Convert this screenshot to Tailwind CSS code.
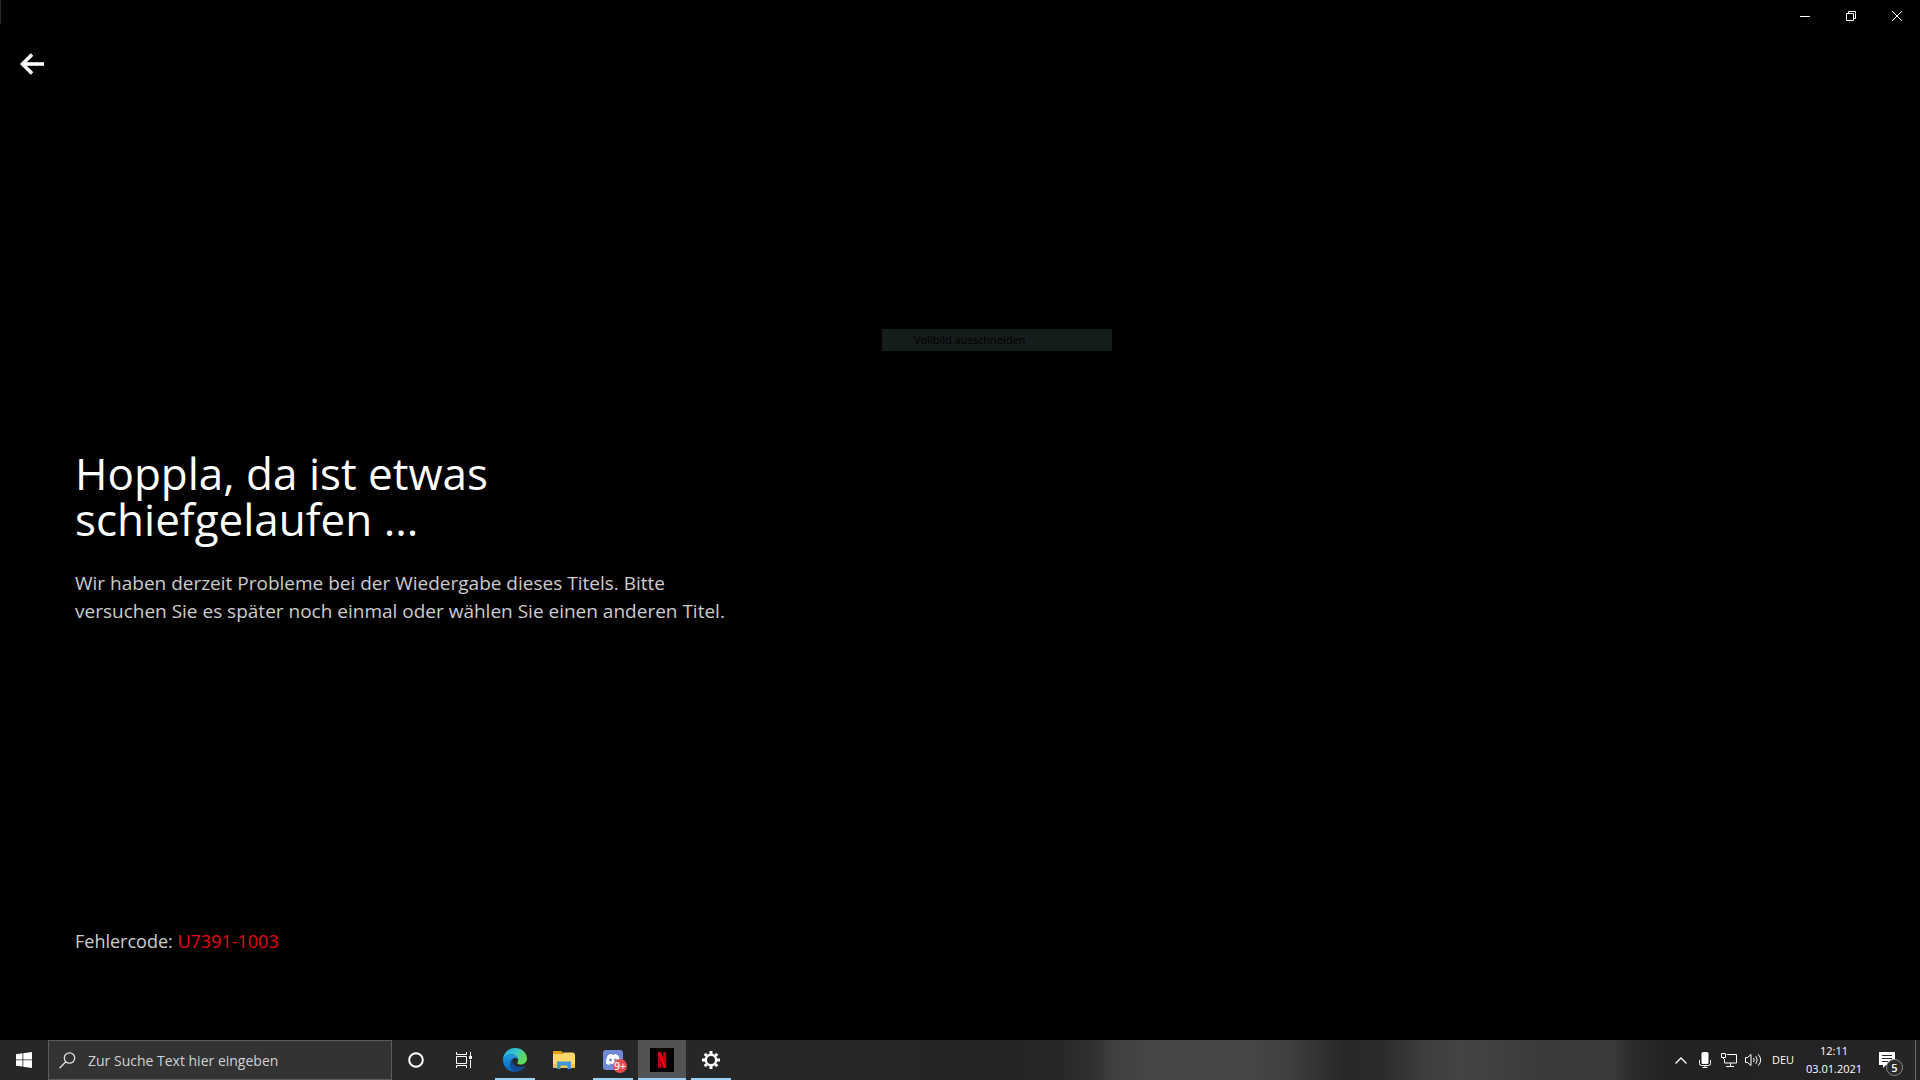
<!DOCTYPE html>
<html lang="de">
<head>
<meta charset="utf-8">
<meta name="viewport" content="width=device-width, initial-scale=1">
<title>Netflix</title>
<script src="https://cdn.jsdelivr.net/npm/@tailwindcss/browser@4"></script>
</head>
<body class="relative flex h-screen flex-col overflow-hidden bg-black font-['Open_Sans',sans-serif] text-white">

<!-- Window caption -->
<header class="flex h-8 shrink-0 items-start justify-between">
  <span class="h-6 w-px bg-[#2b2b2b]"></span>
  <div class="flex">
    <button type="button" aria-label="Minimieren" class="flex h-8 w-[46px] items-center justify-center">
      <svg class="size-[10px]" viewBox="0 0 10 10" stroke="#fff" fill="none"><path d="M0 5.500h10"/></svg>
    </button>
    <button type="button" aria-label="Verkleinern" class="flex h-8 w-[46px] items-center justify-center">
      <svg class="size-[10px]" viewBox="0 0 10 10" stroke="#fff" fill="none"><path d="M.5 2.500h7v7h-7zM2.500 2.500V.5h7v7h-2"/></svg>
    </button>
    <button type="button" aria-label="Schließen" class="flex h-8 w-[46px] items-center justify-center">
      <svg class="size-[10px]" viewBox="0 0 10 10" stroke="#fff" fill="none"><path d="M0 0l10 10M10 0L0 10"/></svg>
    </button>
  </div>
</header>

<!-- Error page -->
<main class="flex grow flex-col">
  <button type="button" aria-label="Zurück" class="flex size-16 items-center justify-center">
    <svg class="h-6 w-6" viewBox="0 0 24 24" fill="none" stroke="#fff" stroke-width="3.600"><path d="M24.500 12H3"/><path d="M12 2.500L2.500 12l9.500 9.500"/></svg>
  </button>
  <section class="mt-[354px] grow px-[75px]">
    <h1 class="text-[44px] leading-[46px]">Hoppla, da ist etwas<br>schiefgelaufen ...</h1>
    <p class="mt-[27px] text-[19px] leading-7 text-[#cccccc]">Wir haben derzeit Probleme bei der Wiedergabe dieses Titels. Bitte<br>versuchen Sie es später noch einmal oder wählen Sie einen anderen Titel.</p>
  </section>
  <p class="mb-[85px] px-[75px] text-[18px] leading-7 text-[#cccccc]">Fehlercode: <span class="text-[#e50914]">U7391-1003</span></p>
</main>

<!-- Taskbar -->
<footer class="flex h-10 shrink-0 items-stretch bg-[linear-gradient(90deg,#272727_0%,#272727_46%,#232323_50%,#272626_55%,#303030_57%,#404040_58%,#464646_60%,#464646_65%,#404040_67%,#303030_69%,#292828_70%,#2c2b2b_72%,#3c3c3c_74%,#444444_76%,#3b3b3b_80%,#3a3a3a_84%,#2c2c2c_85%,#232222_87%,#262525_100%)]">
  <button type="button" aria-label="Start" class="flex w-12 items-center justify-center">
    <svg class="size-4" viewBox="0 0 16 16" fill="#fff"><path d="M0 2.200L6.500 1.300V7.500H0zM7.300 1.200L16 0v7.500H7.300zM0 8.300h6.500v6.300L0 13.700zM7.300 8.300H16V16l-8.700-1.300z"/></svg>
  </button>
  <label class="flex w-[344px] items-center gap-3 border border-[#5c5c5c] bg-[#333333] px-[10px]">
    <svg class="h-[17px] w-[17px] shrink-0" viewBox="0 0 17 17" fill="none" stroke="#e0e0e0" stroke-width="1.300"><circle cx="10.500" cy="6" r="5.200"/><path d="M6.800 9.700L.5 16.300"/></svg>
    <input type="text" aria-label="Suche" placeholder="Zur Suche Text hier eingeben" class="w-full bg-transparent text-[14px] outline-none placeholder:text-[#d2d2d2]">
  </label>
  <button type="button" aria-label="Cortana" class="flex w-12 items-center justify-center">
    <svg class="size-4" viewBox="0 0 16 16" fill="none" stroke="#fff" stroke-width="2"><circle cx="8" cy="8" r="6.800"/></svg>
  </button>
  <button type="button" aria-label="Taskansicht" class="flex w-12 items-center justify-center">
    <svg class="size-4" viewBox="0 0 16 16" fill="none" stroke="#fff"><path d="M.5 0v2.500h10V0M.5 16v-2.500h10V16M.5 4.500h10v7H.5zM14.500 0v4M14.500 8v8"/><path fill="#fff" stroke="none" d="M13 4h3v3h-3z"/></svg>
  </button>
  <nav aria-label="Apps" class="ml-[3px] flex gap-px">
    <button type="button" aria-label="Edge" class="flex w-12 flex-col items-center">
      <span class="flex grow items-center pt-[2px]">
        <svg class="size-6" viewBox="0 0 24 24">
          <defs>
            <linearGradient id="edgeTop" x1="0" y1="0" x2="1" y2="0.400"><stop offset="0" stop-color="#2aa8e0"/><stop offset=".5" stop-color="#32c3d4"/><stop offset="1" stop-color="#62dc55"/></linearGradient>
            <linearGradient id="edgeLeft" x1="0" y1="0" x2="0" y2="1"><stop offset="0" stop-color="#1f9be4"/><stop offset="1" stop-color="#0a63b8"/></linearGradient>
          </defs>
          <path fill="url(#edgeTop)" d="M0 11.500C.4 5 5.500 0 12 0c7 0 12 5 12 10.500 0 3.500-2.700 6-6 6-2.300 0-3.800-.8-3.800-1.600 0-.5 1-1.200 1-2.900 0-3-2.900-5.500-7-5.500C4.500 6.500 1.500 8.500 0 11.500z"/>
          <path fill="url(#edgeLeft)" d="M0 12C.5 8.500 4 6.500 8 6.500c4.200 0 7.200 2.500 7.200 5.500-.5-1.500-2-2.300-3.300-2.300-2.300.3-4.400 3.300-4.400 6.300 0 4.200 3 7.200 6.500 7.800-.7.100-1.300.2-2 .2C5 24 0 18.600 0 12z"/>
          <path fill="#124a96" d="M11.300 9.900C8.600 10.700 7 13.300 7.200 16.500c.3 4 3.500 7 7 7.200 3.200-.5 6-2.300 7.800-5 .3-.5-.1-.8-.6-.6-1.300.6-2.700.9-4.200.9-4.400 0-7.700-2.700-7.700-5.700 0-1.400.7-2.600 1.800-3.400z"/>
        </svg>
      </span>
      <span class="h-[2px] w-10 bg-[#9bd0fa]"></span>
    </button>
    <button type="button" aria-label="Explorer" class="flex w-12 items-center justify-center">
      <svg class="h-[18px] w-[22px]" viewBox="0 0 22 18">
        <path fill="#e8a010" d="M0 0h8.500l1.500 2h-1v3H0z"/><path fill="#ffd869" d="M0 3h9l1.500-1.500H20L22 3v14H0z"/><path fill="#f5c64e" d="M0 13h22v4H0z"/>
        <path fill="#3d97dc" d="M4 18V10.500h14V18h-3.500v-3.500h-7V18z"/>
      </svg>
    </button>
    <button type="button" aria-label="Discord" class="flex w-12 flex-col items-center">
      <span class="relative flex grow items-center pt-[2px]">
        <svg class="size-6" viewBox="0 0 24 24">
          <rect x="2" y="2" width="20" height="20" rx="3" fill="#7289da"/>
          <path fill="#fff" d="M7 7.300c1.200-.9 2.500-1.300 3.600-1.300l.4.800c.7-.1 1.300-.1 2 0l.5-.8c1.100 0 2.400.4 3.500 1.300 1.500 2.500 2.300 5 2 8-1.200 1-2.400 1.500-3.600 1.500l-.8-1.200c-1.700.4-3.600.4-5.200 0l-.8 1.200c-1.200 0-2.500-.5-3.600-1.500-.3-3 .4-5.500 2-8z"/>
          <circle cx="9.500" cy="12" r="1.400" fill="#7289da"/><circle cx="14.500" cy="12" r="1.400" fill="#7289da"/>
        </svg>
        <span class="absolute -right-[2px] bottom-[5px] flex size-[14px] items-center justify-center rounded-full bg-[#ec4b4f] text-[10px] leading-none font-semibold">9+</span>
      </span>
      <span class="h-[2px] w-10 bg-[#9bd0fa]"></span>
    </button>
    <button type="button" aria-label="Netflix" class="flex w-12 flex-col items-center bg-[#535353]">
      <span class="flex grow items-center pt-[2px]">
        <svg class="size-6" viewBox="0 0 24 24">
          <rect width="24" height="24" fill="#000"/>
          <path fill="#b1060f" d="M8 4h3v15.700L8 20zM13.200 4h3v16l-3-.3z"/>
          <path fill="#e50914" d="M8 4h3l5.200 16-3-.3z"/>
        </svg>
      </span>
      <span class="h-[2px] w-12 bg-[#9bd0fa]"></span>
    </button>
    <button type="button" aria-label="Einstellungen" class="flex w-12 flex-col items-center">
      <span class="flex grow items-center pt-[2px]">
        <svg class="h-[18px] w-[18px]" viewBox="-9 -9 18 18" fill="none" stroke="#fff">
          <circle r="5.200" stroke-width="2.400"/>
          <path stroke-width="3" d="M0-6v-3M0 6v3M-6 0h-3M6 0h3M-4.300-4.300l-2-2M4.300-4.300l2-2M-4.300 4.300l-2 2M4.300 4.300l2 2"/>
        </svg>
      </span>
      <span class="h-[2px] w-10 bg-[#9bd0fa]"></span>
    </button>
  </nav>

  <div class="ml-auto flex items-center">
    <button type="button" aria-label="Ausgeblendete Symbole" class="flex w-6 justify-center">
      <svg class="h-[7px] w-3" viewBox="0 0 12 7" fill="none" stroke="#fff" stroke-width="1.300"><path d="M.5 6.500L6 1l5.500 5.500"/></svg>
    </button>
    <button type="button" aria-label="Mikrofon" class="flex w-6 justify-center">
      <svg class="h-4 w-3" viewBox="0 0 12 16" fill="none" stroke="#fff"><rect x="2.500" y="0" width="7" height="12" rx="1.500" fill="#fff" stroke="none"/><path d="M.5 8v3.500q0 2 2 2h7q2 0 2-2V8M6 13.500V16M3.500 15.500h5"/></svg>
    </button>
    <button type="button" aria-label="Netzwerk" class="flex w-6 justify-center">
      <svg class="h-[14px] w-4" viewBox="0 0 16 14" fill="none" stroke="#fff"><path d="M6 1.500h9.500v8.500h-12V6M9.500 10v3.500M5 13.500h8M.5 .5h4v4h-4zM2.500 4.500V6"/></svg>
    </button>
    <button type="button" aria-label="Lautstärke" class="flex w-6 justify-center">
      <svg class="h-[14px] w-[17px]" viewBox="0 0 17 14" fill="none" stroke="#fff"><path d="M.5 4.500h2L6 1.500v11L2.500 9.500h-2zM8.500 5q1.500 2 0 4M10.800 3.200q3 3.800 0 7.600M13.200 1.300q5 5.700 0 11.400"/></svg>
    </button>
    <button type="button" class="w-9 text-center text-[11px]">DEU</button>
    <button type="button" class="w-[66px] text-center text-[11px] leading-[18px]">12:11<br>03.01.2021</button>
    <button type="button" aria-label="Benachrichtigungen" class="relative flex h-10 w-12 items-center justify-center pr-2">
      <svg class="h-4 w-4" viewBox="0 0 16 16"><path fill="#fff" d="M0 0h16v13H7l-3 3v-3H0z"/><path stroke="#2a2a2a" d="M3 3.500h10M3 6.500h10M3 9.500h6"/></svg>
      <span class="absolute top-[19px] left-[19px] flex size-[17px] items-center justify-center rounded-full border border-[#8a8a8a] bg-[#2a2a2a] text-[11px] leading-none font-semibold">5</span>
    </button>
    <span class="mr-1 h-10 w-px bg-[#6b6b6b]"></span>
  </div>
</footer>

<!-- Fading snip menu entry -->
<div class="absolute top-[329px] left-[882px] h-[22px] w-[230px] bg-[#151c1c] pl-8 text-[11px] leading-[22px] font-medium text-black">Vollbild ausschneiden</div>
</body>
</html>
